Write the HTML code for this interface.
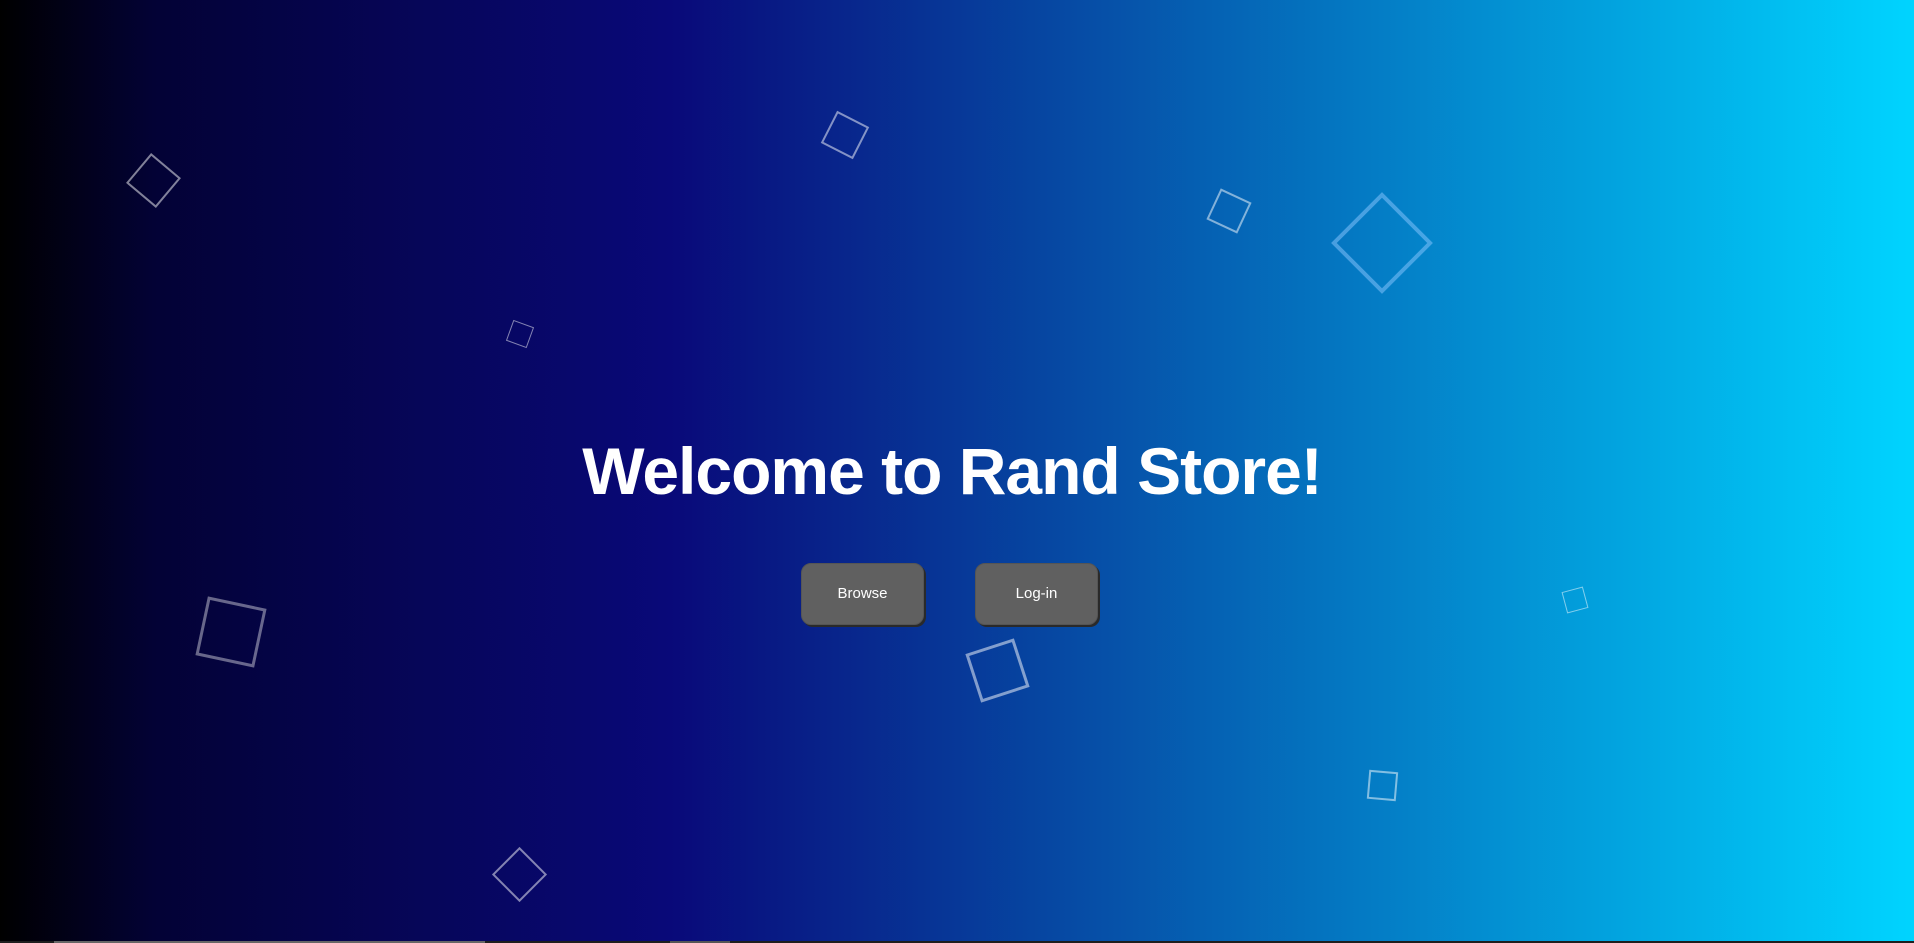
<!DOCTYPE html>
<html><head><meta charset="utf-8"><style>
html,body{margin:0;padding:0;width:1914px;height:943px;overflow:hidden}
body{background:linear-gradient(90deg,#000000 0%,#030235 8%,#090979 35%,#00d4ff 100%);position:relative;font-family:"Liberation Sans",sans-serif}
.s{position:absolute;box-sizing:border-box;border:2px solid rgba(255,255,255,.5)}
h1{position:absolute;left:0;width:1904px;top:427px;margin:0;text-align:center;color:#fff;font-size:66px;font-weight:bold;letter-spacing:-1px;line-height:88px}
.b{position:absolute;top:563px;width:123px;height:62px;background:#606060;border-radius:10px;box-shadow:2px 2px 0 #2a2a2a;color:#fff;font-size:15px;line-height:60px;text-align:center;border:1px solid #555;box-sizing:border-box}
.bar{position:absolute;left:0;bottom:0;width:1914px;height:2px;background:#1e1e1e}
</style></head><body>
<div class="s" style="left:134px;top:161px;width:39px;height:39px;transform:rotate(40deg)"></div>
<div class="s" style="left:827px;top:117px;width:36px;height:36px;transform:rotate(27deg)"></div>
<div class="s" style="left:509px;top:323px;width:22px;height:22px;transform:rotate(20deg);border-width:1.5px"></div>
<div class="s" style="left:1212px;top:194px;width:34px;height:34px;transform:rotate(25deg)"></div>
<div class="s" style="left:1346px;top:207px;width:72px;height:72px;transform:rotate(45deg);border-width:4px;border-color:rgba(140,200,255,.5)"></div>
<div class="s" style="left:201px;top:602px;width:60px;height:60px;transform:rotate(12deg);border-width:3px;border-color:rgba(255,255,255,.4)"></div>
<div class="s" style="left:972px;top:645px;width:51px;height:51px;transform:rotate(-18deg);border-width:3px"></div>
<div class="s" style="left:1564px;top:589px;width:22px;height:22px;transform:rotate(-15deg);border-width:1.5px"></div>
<div class="s" style="left:1368px;top:771px;width:29px;height:29px;transform:rotate(5deg)"></div>
<div class="s" style="left:500px;top:855px;width:39px;height:39px;transform:rotate(45deg)"></div>
<h1>Welcome to Rand Store!</h1>
<div class="b" style="left:801px">Browse</div>
<div class="b" style="left:975px">Log-in</div>
<div class="bar"></div>
<div style="position:absolute;left:54px;bottom:0;width:431px;height:2px;background:#666"></div>
<div style="position:absolute;left:670px;bottom:0;width:60px;height:2px;background:#555"></div>
</body></html>
